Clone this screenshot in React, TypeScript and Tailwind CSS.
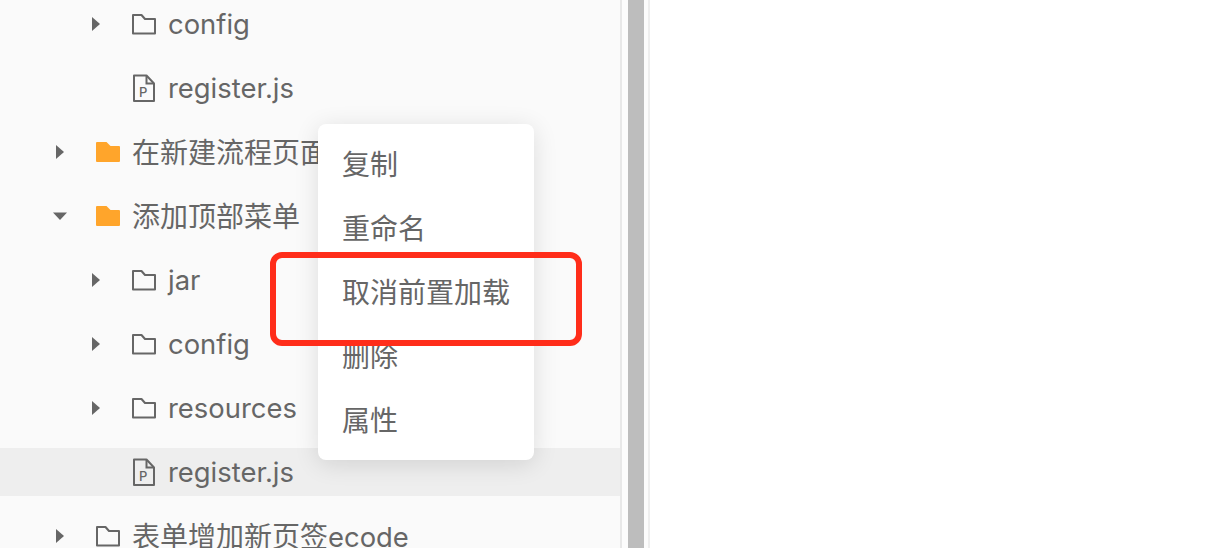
import React from "react";

const font = { fontFamily: '"Inter", "Noto Sans CJK SC", sans-serif' };

function Caret({ open }: { open?: boolean }) {
  return (
    <svg width="14" height="16" viewBox="0 0 14 16" className="shrink-0">
      {open ? <path d="M0 4.500H14L7 12Z" fill="#666" /> : <path d="M3 1L11 8L3 15Z" fill="#666" />}
    </svg>
  );
}

function Folder({ filled }: { filled?: boolean }) {
  return (
    <svg width="28" height="24" viewBox="0 0 28 24" className="shrink-0">
      {filled ? (
        <path d="M2 3a1 1 0 0 1 1-1h9.500l4 4H25a1 1 0 0 1 1 1V21a1 1 0 0 1-1 1H3a1 1 0 0 1-1-1Z" fill="#ffa52b" />
      ) : (
        <path d="M3 3h8.500l3.500 4H25v14.500H3Z" fill="none" stroke="#666" strokeWidth="2" strokeLinejoin="round" />
      )}
    </svg>
  );
}

function FileP() {
  return (
    <svg width="28" height="28" viewBox="0 0 28 28" className="shrink-0">
      <path d="M4 1.500H16.500L24 9.500V27H4Z" fill="none" stroke="#666" strokeWidth="2" strokeLinejoin="round" />
      <path d="M16.500 2V9.500H23.500" fill="none" stroke="#666" strokeWidth="2" />
      <text x="9" y="22.500" fontSize="13" fontWeight="500" fill="#666" fontFamily="Inter, sans-serif">P</text>
    </svg>
  );
}

type Row = { label: string; latin?: string; level: 0 | 1; kind: "folder" | "filled" | "file"; open?: boolean; active?: boolean };

const rows: Row[] = [
  { label: "", latin: "config", level: 1, kind: "folder" },
  { label: "", latin: "register.js", level: 1, kind: "file" },
  { label: "在新建流程页面", level: 0, kind: "filled" },
  { label: "添加顶部菜单", level: 0, kind: "filled", open: true },
  { label: "", latin: "jar", level: 1, kind: "folder" },
  { label: "", latin: "config", level: 1, kind: "folder" },
  { label: "", latin: "resources", level: 1, kind: "folder" },
  { label: "", latin: "register.js", level: 1, kind: "file", active: true },
  { label: "表单增加新页签", latin: "ecode", level: 0, kind: "folder" },
];

const menu = ["复制", "重命名", "取消前置加载", "删除", "属性"];

export default function App() {
  return (
    <div className="relative flex h-[548px] w-[1220px] overflow-hidden bg-white" style={font}>
      <div className="flex h-full w-[620px] shrink-0 flex-col gap-4 bg-[#fafafa]">
        {rows.map((r, i) => (
          <div
            key={i}
            className={`flex h-12 shrink-0 items-center whitespace-nowrap text-[28px] text-[#666] ${r.level === 1 ? "pl-[89px]" : "pl-[53px]"} ${r.active ? "bg-[#eeeeee]" : ""}`}
          >
            <span className="flex w-[14px] justify-center">
              {r.kind === "file" ? null : <Caret open={r.open} />}
            </span>
            <span className="ml-[27px] flex w-[28px] justify-center">
              {r.kind === "file" ? <FileP /> : <Folder filled={r.kind === "filled"} />}
            </span>
            <span className={`ml-[10px] ${r.label ? "pt-[2px]" : ""}`}>
              {r.label}
              {r.latin ? <span className="text-[27.4px]">{r.latin}</span> : null}
            </span>
          </div>
        ))}
      </div>
      <div className="h-full w-[2px] shrink-0 bg-[#e8e8e8]" />
      <div className="h-full w-[6px] shrink-0 bg-[#fcfcfc]" />
      <div className="h-full w-4 shrink-0 bg-[#bdbdbd]" />
      <div className="h-full w-1 shrink-0 bg-[#fcfcfc]" />
      <div className="h-full w-[2px] shrink-0 bg-[#eeeeee]" />
      <div className="h-full flex-1 bg-white" />

      <div className="absolute left-[318px] top-[124px] flex w-[216px] flex-col rounded-lg bg-white py-2 shadow-[0_4px_24px_rgba(0,0,0,0.12)]">
        {menu.map((m) => (
          <div key={m} className="flex h-16 items-center pl-6 pt-[2px] text-[28px] text-[#666]">
            {m}
          </div>
        ))}
      </div>

      <div className="absolute left-[270px] top-[252px] h-[94px] w-[312px] rounded-xl border-[6px] border-[#ff2d1a]" />
    </div>
  );
}
